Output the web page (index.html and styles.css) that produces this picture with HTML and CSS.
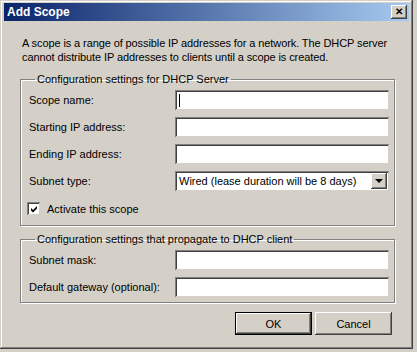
FILE: index.html
```html
<!DOCTYPE html>
<html lang="en">
<head>
    <meta charset="UTF-8">
    <title>Add Scope</title>
    <link rel="stylesheet" href="styles.css">
</head>
<body>
    <div class="window">
        <div class="titlebar">
            <span class="title">Add Scope</span>
            <button class="close">&#x2715;</button>
        </div>
        <div class="content">
            <p class="intro">A scope is a range of possible IP addresses for a network. The DHCP server cannot distribute IP addresses to clients until a scope is created.</p>

            <fieldset class="group group-server">
                <legend>Configuration settings for DHCP Server</legend>
                <div class="row">
                    <label for="scopeName">Scope name:</label>
                    <div class="field"><span class="caret"></span></div>
                </div>
                <div class="row">
                    <label>Starting IP address:</label>
                    <div class="field"></div>
                </div>
                <div class="row">
                    <label>Ending IP address:</label>
                    <div class="field"></div>
                </div>
                <div class="row">
                    <label>Subnet type:</label>
                    <div class="field select">
                        <span class="value">Wired (lease duration will be 8 days)</span>
                        <span class="arrow"></span>
                    </div>
                </div>
                <div class="check">
                    <span class="box">
                        <svg width="7" height="7" viewBox="0 0 7 7"><path d="M0 2 L2 4 L6 0 L6 2.5 L2 6.5 L0 4.5 Z" fill="#000"/></svg>
                    </span>
                    <span>Activate this scope</span>
                </div>
            </fieldset>

            <fieldset class="group group-client">
                <legend>Configuration settings that propagate to DHCP client</legend>
                <div class="row">
                    <label>Subnet mask:</label>
                    <div class="field"></div>
                </div>
                <div class="row">
                    <label>Default gateway (optional):</label>
                    <div class="field"></div>
                </div>
            </fieldset>

            <div class="buttons">
                <button class="btn btn-default">OK</button>
                <button class="btn">Cancel</button>
            </div>
        </div>
    </div>
</body>
</html>
```

FILE: styles.css
```css
body {
    margin: 0;
    background-color: #d4d0c8;
    font-family: "Liberation Sans", Arial, sans-serif;
    font-size: 11px;
    color: #000;
}

.window {
    width: 413px;
    height: 349px;
    box-sizing: border-box;
    padding: 3px 4px 4px;
    background-color: #d4d0c8;
    box-shadow: inset -1px -1px #404040, inset 1px 1px #d4d0c8,
                inset -2px -2px #808080, inset 2px 2px #fff,
                0 3px 0 #2c2c2c;
}

.titlebar {
    height: 18px;
    display: flex;
    align-items: center;
    justify-content: space-between;
    padding: 0 2px 0 3px;
    background: linear-gradient(to right, #0a246a, #a6caf0);
}

.title {
    color: #fff;
    font-weight: bold;
    font-size: 12px;
}

.close {
    width: 16px;
    height: 14px;
    padding: 0;
    border: none;
    background-color: #d4d0c8;
    font-size: 10px;
    font-weight: bold;
    line-height: 14px;
    color: #000;
    box-shadow: inset -1px -1px #404040, inset 1px 1px #fff,
                inset -2px -2px #808080;
}

.content {
    padding: 0 0 0 16px;
}

.intro {
    margin: 15px 0 0 2px;
    width: 385px;
    line-height: 14px;
    letter-spacing: -0.1px;
}

.group {
    width: 374px;
    margin: 0;
    padding: 5px 5px 0 8px;
    box-sizing: border-box;
    border: 1px solid #808080;
    box-shadow: 1px 1px 0 #fff, inset 1px 1px 0 #fff;
}

.group legend {
    padding: 0 2px;
    margin-left: 6px;
}

.group-server {
    margin-top: 9px;
    height: 153px;
}

.group-client {
    margin-top: 7px;
    height: 70px;
}

.row {
    display: flex;
    align-items: center;
    height: 20px;
    margin-bottom: 7px;
}

.row label {
    width: 146px;
}

.field {
    width: 214px;
    height: 20px;
    box-sizing: border-box;
    background-color: #fff;
    box-shadow: inset 1px 1px #808080, inset -1px -1px #d4d0c8,
                inset 2px 2px #404040;
    display: flex;
    align-items: center;
}

.caret {
    width: 1px;
    height: 13px;
    margin-left: 4px;
    background-color: #000;
}

.select .value {
    flex: 1;
    padding-left: 4px;
}

.arrow {
    width: 16px;
    height: 16px;
    margin-right: 2px;
    background-color: #d4d0c8;
    box-shadow: inset -1px -1px #404040, inset 1px 1px #fff,
                inset -2px -2px #808080;
    position: relative;
}

.arrow::after {
    content: "";
    position: absolute;
    left: 4px;
    top: 6px;
    border-left: 4px solid transparent;
    border-right: 4px solid transparent;
    border-top: 4px solid #000;
}

.check {
    display: flex;
    align-items: center;
    gap: 7px;
    margin-left: -2px;
    margin-top: 11px;
}

.box {
    width: 13px;
    height: 13px;
    box-sizing: border-box;
    background-color: #fff;
    box-shadow: inset 1px 1px #808080, inset -1px -1px #d4d0c8,
                inset 2px 2px #404040;
    display: flex;
    align-items: center;
    justify-content: center;
    padding: 1px 0 0 1px;
}

.buttons {
    display: flex;
    justify-content: flex-end;
    gap: 3px;
    width: 372px;
    margin-top: 9px;
}

.btn {
    width: 77px;
    height: 23px;
    padding: 0;
    border: none;
    background-color: #d4d0c8;
    font-family: inherit;
    font-size: 11px;
    color: #000;
    box-shadow: inset -1px -1px #404040, inset 1px 1px #fff,
                inset -2px -2px #808080;
}

.btn-default {
    box-shadow: inset 0 0 0 1px #000, inset -2px -2px #404040,
                inset 2px 2px #fff, inset -3px -3px #808080;
}
```
